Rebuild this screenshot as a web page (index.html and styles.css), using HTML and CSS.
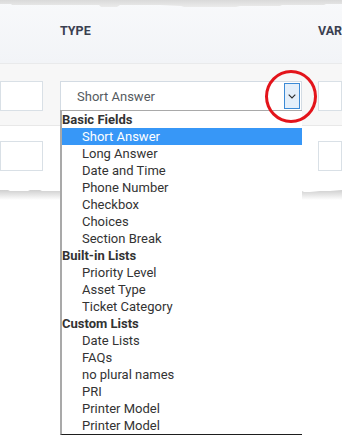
FILE: index.html
```html
<!DOCTYPE html>
<html>
<head>
<meta charset="utf-8">
<link rel="stylesheet" href="styles.css">
</head>
<body>
<div class="page">
  <div class="header">
    <svg class="torn-top" width="342" height="8" viewBox="0 0 342 8">
      <defs>
        <linearGradient id="gt" x1="0" y1="0" x2="0" y2="1">
          <stop offset="0" stop-color="#d9d9d9"/>
          <stop offset="1" stop-color="#ebebeb"/>
        </linearGradient>
      </defs>
      <polygon fill="url(#gt)" points="0,0 342,0 342,4 326,4 324,5 282,5 280,6 240,6 236,7 184,7 181,6 160,5 120,5 117,7 101,7 99,5 12,5 11,4 0,4"/>
    </svg>
    <div class="cols head-cols">
      <div></div>
      <div class="th">TYPE</div>
      <div class="th">VAR</div>
    </div>
  </div>
  <div class="row row1">
    <div class="cols">
      <div class="input"></div>
      <div class="select">
        <span class="select-text">Short Answer</span>
        <span class="chev">
          <svg width="8" height="5" viewBox="0 0 8 5"><path d="M0.7 0.7 L4 4 L7.3 0.7" fill="none" stroke="#2b2b2b" stroke-width="1.1"/></svg>
        </span>
      </div>
      <div class="input"></div>
    </div>
  </div>
  <div class="row row2">
    <div class="cols">
      <div class="input"></div>
      <div></div>
      <div class="input"></div>
    </div>
  </div>
  <svg class="torn-bottom" width="342" height="14" viewBox="0 0 342 14">
    <defs>
      <linearGradient id="gb" x1="0" y1="0" x2="0" y2="1">
        <stop offset="0" stop-color="#cfcfcf"/>
        <stop offset="1" stop-color="#ffffff"/>
      </linearGradient>
    </defs>
    <polygon fill="url(#gb)" points="0,2 8,2 10,3 28,3 30,2 40,2 42,3 60,3 62,2 300,2 304,4 310,4 320,3 330,3 342,2 342,12 0,12"/>
  </svg>

  <div class="dropdown">
    <div class="grp">Basic Fields</div>
    <div class="opt sel">Short Answer</div>
    <div class="opt">Long Answer</div>
    <div class="opt">Date and Time</div>
    <div class="opt">Phone Number</div>
    <div class="opt">Checkbox</div>
    <div class="opt">Choices</div>
    <div class="opt">Section Break</div>
    <div class="grp">Built-in Lists</div>
    <div class="opt">Priority Level</div>
    <div class="opt">Asset Type</div>
    <div class="opt">Ticket Category</div>
    <div class="grp">Custom Lists</div>
    <div class="opt">Date Lists</div>
    <div class="opt">FAQs</div>
    <div class="opt">no plural names</div>
    <div class="opt">PRI</div>
    <div class="opt">Printer Model</div>
    <div class="opt">Printer Model</div>
  </div>
  <div class="circle"></div>
</div>
</body>
</html>
```

FILE: styles.css
```css
html, body {
  margin: 0;
  padding: 0;
  background: #ffffff;
}
body {
  width: 342px;
  height: 438px;
  overflow: hidden;
  font-family: Roboto, "Liberation Sans", sans-serif;
}
.page {
  position: relative;
  width: 342px;
  height: 438px;
  background: #ffffff;
}
.header {
  height: 63px;
  background: linear-gradient(#f8f9fb, #f2f4f7);
  border-bottom: 1px solid #e9eaeb;
  position: relative;
}
.torn-top {
  display: block;
  position: absolute;
  top: 0;
  left: 0;
}
.cols {
  display: grid;
  grid-template-columns: 43px 242px 1fr;
  column-gap: 17px;
}
.cols > :nth-child(3) {
  margin-left: -1px;
}
.head-cols {
  padding-top: 24px;
}
.th {
  font-weight: bold;
  font-size: 12.5px;
  color: #3a4050;
  line-height: 13px;
}
.row1 {
  height: 62px;
  background: #f7f7f7;
  border-bottom: 1px solid #e8e8e8;
  box-sizing: border-box;
  padding-top: 17px;
}
.row2 {
  height: 62px;
  background: #ffffff;
  box-sizing: border-box;
  padding-top: 15px;
}
.input {
  height: 30px;
  box-sizing: border-box;
  background: #ffffff;
  border: 1px solid #d9e0e6;
}
.select {
  height: 30px;
  box-sizing: border-box;
  background: #ffffff;
  border: 1px solid #d3dbe3;
  display: flex;
  align-items: center;
  justify-content: space-between;
  padding: 0 1px 0 16px;
}
.select-text {
  font-size: 13px;
  color: #555a60;
}
.chev {
  width: 16px;
  height: 26px;
  box-sizing: border-box;
  border: 1px solid #3b8ad6;
  background: #e4effa;
  display: flex;
  align-items: center;
  justify-content: center;
}
.torn-bottom {
  display: block;
  margin-top: 0;
}
.dropdown {
  position: absolute;
  left: 60px;
  top: 110px;
  width: 242px;
  box-sizing: border-box;
  background: #ffffff;
  border-left: 2px solid #a9a9a9;
  border-top: 1px solid #a9a9a9;
  border-bottom: 1px solid #1e1e1e;
}
.grp, .opt {
  height: 17px;
  line-height: 17px;
  font-size: 13px;
  color: #333333;
  white-space: nowrap;
}
.grp {
  font-weight: bold;
  padding-left: 0;
}
.opt {
  padding-left: 20px;
}
.opt.sel {
  background: #3797f7;
  color: #ffffff;
}
.circle {
  position: absolute;
  left: 265px;
  top: 70px;
  width: 52px;
  height: 53px;
  box-sizing: border-box;
  border: 3px solid #e3141b;
  border-radius: 50%;
}
```
